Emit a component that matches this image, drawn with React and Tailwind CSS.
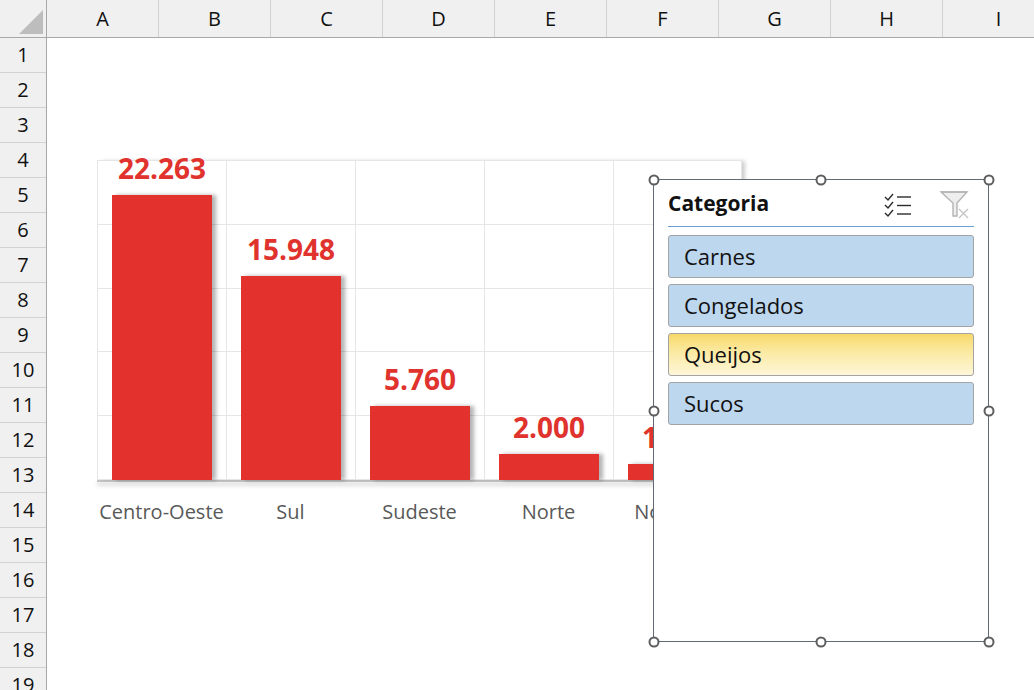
const columns = ["A", "B", "C", "D", "E", "F", "G", "H", "I"];
const rows = Array.from({ length: 19 }, (_, i) => i + 1);

const data = [
  { name: "Centro-Oeste", value: 22263 },
  { name: "Sul", value: 15948 },
  { name: "Sudeste", value: 5760 },
  { name: "Norte", value: 2000 },
  { name: "Nordeste", value: 1250 },
];

const categories = [
  { name: "Carnes" },
  { name: "Congelados" },
  { name: "Queijos", active: true },
  { name: "Sucos" },
];

const fmt = (n) => n.toLocaleString("de-DE");

const MultiSelectIcon = () => (
  <svg width="30" height="26" viewBox="0 0 30 26" fill="none" stroke="#2b2b2b" strokeWidth="1.4">
    <path d="M2 5 L5 8 L10 2" />
    <path d="M2 13 L5 16 L10 10" />
    <path d="M2 21 L5 24 L10 18" />
    <path d="M14 5 H28" />
    <path d="M14 13.5 H28" />
    <path d="M14 22 H28" />
  </svg>
);

const ClearFilterIcon = () => (
  <svg width="32" height="30" viewBox="0 0 32 30" fill="none" stroke="#b4b4b4" strokeWidth="1.4">
    <path d="M2 2 H28 L18 13 V26 H14 V13 Z" fill="#eeeeee" />
    <path d="M2 2 L28 2" />
    <path d="M20 19 L29 28 M29 19 L20 28" stroke="#c4c4c4" />
  </svg>
);

const Handle = ({ className }) => (
  <div className={`absolute w-[11px] h-[11px] rounded-full bg-white border-2 border-[#5e5e5e] -translate-x-1/2 -translate-y-1/2 ${className}`} />
);

function Chart() {
  return (
    <div className="absolute left-[48px] top-[120px] w-[652px] h-[378px] bg-white pl-[2px] pt-[2px]">
      <div className="relative w-[645px] h-[320px] shadow-[4px_0_4px_-1px_rgba(0,0,0,0.2)]">
        <div className="absolute inset-0 grid grid-rows-5 border-t border-[#e6e6e6]">
          {[0, 1, 2, 3, 4].map((i) => (
            <div key={i} className="border-b border-[#e6e6e6]" />
          ))}
        </div>
        <div className="absolute inset-0 grid grid-cols-5">
          {data.map((d) => (
            <div key={d.name} className="border-l border-[#e6e6e6] last:border-r" />
          ))}
        </div>
        <div className="relative grid grid-cols-5 grid-rows-[320px] h-full">
          {data.map((d) => (
            <div key={d.name} className="min-h-0 h-[320px] flex flex-col justify-end items-center pl-[1px]">
              <div className="shrink-0 text-[28px] leading-[32px] font-bold text-[#e0332d] mb-[11px]">{fmt(d.value)}</div>
              <div
                className="shrink-0 w-[100px] bg-[#e3322d] shadow-[4px_0_4px_rgba(0,0,0,0.3)]"
                style={{ height: (d.value / 25000) * 320 }}
              />
            </div>
          ))}
        </div>
      </div>
      <div className="w-[645px] h-[2px] bg-[#c4c4c4] shadow-[0_3px_4px_rgba(0,0,0,0.25)]" />
      <div className="grid grid-cols-5 w-[645px] pt-[17px]">
        {data.map((d) => (
          <div key={d.name} className="text-center text-[20px] leading-[26px] text-[#595959]">
            {d.name}
          </div>
        ))}
      </div>
    </div>
  );
}

function Slicer() {
  return (
    <div className="absolute left-[606px] top-[141px] w-[336px] h-[463px] z-10">
      <div className="w-full h-full bg-white border border-[#5f6a75] px-[14px] flex flex-col">
        <div className="flex items-center h-[47px] pt-[2px] border-b border-[#6b9fd0]">
          <div className="text-[21px] font-bold text-[#111] flex-1">Categoria</div>
          <div className="mr-[26px] mt-[1px]">
            <MultiSelectIcon />
          </div>
          <div className="mr-[3px] mt-[2px]">
            <ClearFilterIcon />
          </div>
        </div>
        <div className="flex flex-col gap-[6px] pt-[8px]">
          {categories.map((c) => (
            <div
              key={c.name}
              className={`h-[43px] rounded-[3px] border border-[#a3a3a3] flex items-center pl-[15px] text-[22px] text-[#111] ${
                c.active
                  ? "bg-[linear-gradient(to_bottom,#f7d96a,#fbeaa4_45%,#fdf6d8)]"
                  : "bg-[#bdd7ee]"
              }`}
            >
              {c.name}
            </div>
          ))}
        </div>
      </div>
      <Handle className="left-[0.5px] top-[0.5px]" />
      <Handle className="left-1/2 top-[0.5px]" />
      <Handle className="left-[calc(100%-0.5px)] top-[0.5px]" />
      <Handle className="left-[0.5px] top-1/2" />
      <Handle className="left-[calc(100%-0.5px)] top-1/2" />
      <Handle className="left-[0.5px] top-[calc(100%-0.5px)]" />
      <Handle className="left-1/2 top-[calc(100%-0.5px)]" />
      <Handle className="left-[calc(100%-0.5px)] top-[calc(100%-0.5px)]" />
    </div>
  );
}

export default function App() {
  return (
    <div className="w-[1034px] h-[690px] overflow-hidden bg-white font-['Open_Sans','Noto_Sans',sans-serif] flex flex-col">
      <div className="flex h-[38px] shrink-0 bg-[#f0f0f0] border-b border-[#a8a8a8]">
        <div className="w-[47px] shrink-0 border-r border-[#a8a8a8] flex items-end justify-end p-[3px]">
          <div className="w-0 h-0 border-l-[24px] border-l-transparent border-b-[24px] border-b-[#bdbdbd]" />
        </div>
        {columns.map((c) => (
          <div
            key={c}
            className="w-[112px] shrink-0 border-r border-[#d2d2d2] flex items-center justify-center text-[20px] text-[#111]"
          >
            {c}
          </div>
        ))}
      </div>
      <div className="flex flex-1 min-h-0">
        <div className="w-[47px] shrink-0 bg-[#f0f0f0] border-r border-[#a8a8a8]">
          {rows.map((r) => (
            <div
              key={r}
              className="h-[35px] border-b border-[#d2d2d2] flex items-center justify-center text-[20px] text-[#111]"
            >
              {r}
            </div>
          ))}
        </div>
        <div className="relative flex-1">
          <Chart />
          <Slicer />
        </div>
      </div>
    </div>
  );
}
